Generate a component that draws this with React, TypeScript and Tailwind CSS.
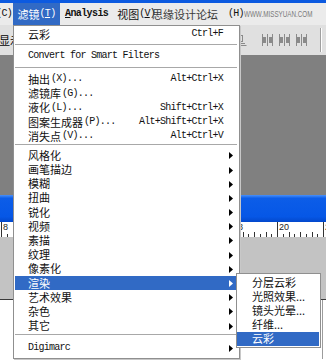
import React from 'react';

const mono = "font-['Liberation_Mono',monospace] text-[10px] tracking-[-0.75px]";

const Arrow = ({ white }: { white?: boolean }) => (
  <svg width="4" height="7" viewBox="0 0 4 7" className="absolute right-[3px] top-[4px]">
    <path d="M0 0L4 3.5L0 7Z" fill={white ? '#fff' : '#000'} />
  </svg>
);

type RowProps = {
  label: string;
  mn?: string;
  shortcut?: string;
  sub?: boolean;
  active?: boolean;
  latin?: boolean;
};

const Row = ({ label, mn, shortcut, sub, active, latin }: RowProps) => (
  <div
    className={`relative ml-[1px] mr-[3px] h-[14.2px] flex items-center pl-[13px] pr-[13px] whitespace-nowrap ${
      active ? 'bg-[#316ac5] text-white' : 'text-[#111]'
    }`}
  >
    <span className={latin ? mono : ''}>{label}</span>
    {mn && <span className={`${mono} ml-[1px]`}>{mn}</span>}
    {shortcut && <span className={`${mono} ml-auto`}>{shortcut}</span>}
    {sub && <Arrow white={active} />}
  </div>
);

const Sep = ({ pad }: { pad: string }) => (
  <div className={pad}>
    <div className="ml-[1px] mr-[2px] h-px bg-[#a8a8a8]" />
  </div>
);

const SubRow = ({ label, active }: { label: string; active?: boolean }) => (
  <div
    className={`h-[14.2px] mr-[1px] flex items-center pl-[15px] whitespace-nowrap ${
      active ? 'bg-[#316ac5] text-white' : 'text-[#111]'
    }`}
  >
    {label}
  </div>
);

const AlignIcon = () => (
  <svg width="14" height="14" viewBox="0 0 14 14" fill="none" stroke="#8a8a8a" strokeWidth="1">
    <rect x="3.5" y="2.5" width="6" height="6" />
    <path d="M6.5 8.5V12M0.5 12.5H13.5M1 10.5H12" />
  </svg>
);

const DistIcon = () => (
  <svg width="13" height="14" viewBox="0 0 13 14" fill="none" stroke="#8a8a8a" strokeWidth="1">
    <path d="M1.5 1V13M6.5 1V13M11.5 1V13" />
    <rect x="2.5" y="4.5" width="2" height="5" fill="#8a8a8a" />
    <rect x="8.5" y="4.5" width="2" height="5" fill="#8a8a8a" />
  </svg>
);

const Ruler = () => {
  const majors = [1, 47, 93, 139, 185, 231, 277, 323];
  const labels = ['8', '10', '12', '14', '16', '18', '20', '22'];
  const minors: number[] = [];
  for (let x = 1; x < 326; x += 5.75) minors.push(x);
  return (
    <svg width="326" height="15" viewBox="0 0 326 15" className="block">
      {minors.map((x, i) => (
        <line
          key={i}
          x1={Math.round(x) + 0.5}
          x2={Math.round(x) + 0.5}
          y1={i % 8 === 0 ? 0 : i % 2 === 0 ? 10 : 12}
          y2={15}
          stroke="#333"
          strokeWidth="1"
        />
      ))}
      {majors.map((x, i) => (
        <text key={x} x={x + 2} y={8} fontSize="9" fontFamily="Liberation Sans, sans-serif" fill="#222">
          {labels[i]}
        </text>
      ))}
    </svg>
  );
};

export default function App() {
  return (
    <div className="relative w-[326px] h-[360px] overflow-hidden bg-white font-['Noto_Sans_CJK_SC',sans-serif] text-[11px] leading-none">
      {/* window title strip */}
      <div className="h-[3px] bg-[#0c5ae0]" />

      {/* menu bar */}
      <div className="h-[22px] bg-[#ebebeb] flex items-stretch text-[#111] whitespace-nowrap">
        <div className="w-[13px] shrink-0 overflow-hidden flex items-center justify-end pr-[1px]">
          <span className={mono}>(C)</span>
        </div>
        <div className="w-[47px] shrink-0 bg-[#316ac5] text-white flex items-center justify-center">
          滤镜<span className={mono}>(<u>T</u>)</span>
        </div>
        <div className="ml-[5px] shrink-0 flex items-center">
          <span className="font-['Liberation_Mono',monospace] text-[10px] tracking-[-0.6px] font-bold">
            <u>A</u>nalysis
          </span>
        </div>
        <div className="ml-[9px] shrink-0 flex items-center">
          视图<span className={mono}>(<u>V</u>)</span>
        </div>
        <div className="-ml-[3px] shrink-0 flex items-center text-[#3a3a3a]">思缘设计论坛</div>
        <div className="ml-[10px] shrink-0 flex items-center">
          <span className={mono}>(H)</span>
        </div>
        <div className="shrink-0 flex items-center">
          <span className="font-['Liberation_Sans',sans-serif] text-[8.5px] text-[#7a7a7a] inline-block origin-left scale-x-[0.74]">
            WWW.MISSYUAN.COM
          </span>
        </div>
      </div>

      {/* options bar */}
      <div className="h-[30px] bg-[#e0e0e0] flex items-center">
        <span className="-ml-[1px] whitespace-nowrap">显示变换控件</span>
        <div className="ml-auto flex items-center gap-[4px] pr-[4px]">
          <AlignIcon />
          <div className="w-[6px]" />
          <DistIcon />
          <DistIcon />
          <DistIcon />
          <div className="ml-[8px] h-[24px] w-[2px] border-l border-[#a0a0a0] border-r border-r-white" />
        </div>
      </div>

      {/* workspace */}
      <div className="h-[140px] bg-[#808080]" />
      <div className="h-[27px] bg-[linear-gradient(#4a90f8,#0c5de8_12%,#0657e6_80%,#0348cc)]" />
      <div className="h-[15px] bg-white">
        <Ruler />
      </div>
      <div className="h-[63px] bg-[#c3c3c3] border-b border-[#3a3a3a]" />
      <div className="h-[59px] w-[323px] border-r border-[#9c9c9c] bg-white" />

      {/* filter menu */}
      <div className="absolute left-[13px] top-[25px] w-[227px] h-[334px] bg-white border border-[#8f8f8f] pt-[1px] shadow-[1px_1px_0_#c8c8c8]">
        <Row label="云彩" shortcut="Ctrl+F" />
        <Sep pad="pt-[3px] pb-[4px]" />
        <Row label="Convert for Smart Filters" latin />
        <Sep pad="pt-[4px] pb-[4px]" />
        <Row label="抽出" mn="(X)..." shortcut="Alt+Ctrl+X" />
        <Row label="滤镜库" mn="(G)..." />
        <Row label="液化" mn="(L)..." shortcut="Shift+Ctrl+X" />
        <Row label="图案生成器" mn="(P)..." shortcut="Alt+Shift+Ctrl+X" />
        <Row label="消失点" mn="(V)..." shortcut="Alt+Ctrl+V" />
        <Sep pad="pt-[1px] pb-[3px]" />
        <Row label="风格化" sub />
        <Row label="画笔描边" sub />
        <Row label="模糊" sub />
        <Row label="扭曲" sub />
        <Row label="锐化" sub />
        <Row label="视频" sub />
        <Row label="素描" sub />
        <Row label="纹理" sub />
        <Row label="像素化" sub />
        <Row label="渲染" sub active />
        <Row label="艺术效果" sub />
        <Row label="杂色" sub />
        <Row label="其它" sub />
        <Sep pad="pt-[1px] pb-[6.4px]" />
        <Row label="Digimarc" sub latin />
      </div>

      {/* render submenu */}
      <div className="absolute left-[236px] top-[273px] w-[85px] h-[75px] bg-white border border-[#8f8f8f] pt-[1px]">
        <SubRow label="分层云彩" />
        <SubRow label="光照效果..." />
        <SubRow label="镜头光晕..." />
        <SubRow label="纤维..." />
        <SubRow label="云彩" active />
      </div>
    </div>
  );
}
